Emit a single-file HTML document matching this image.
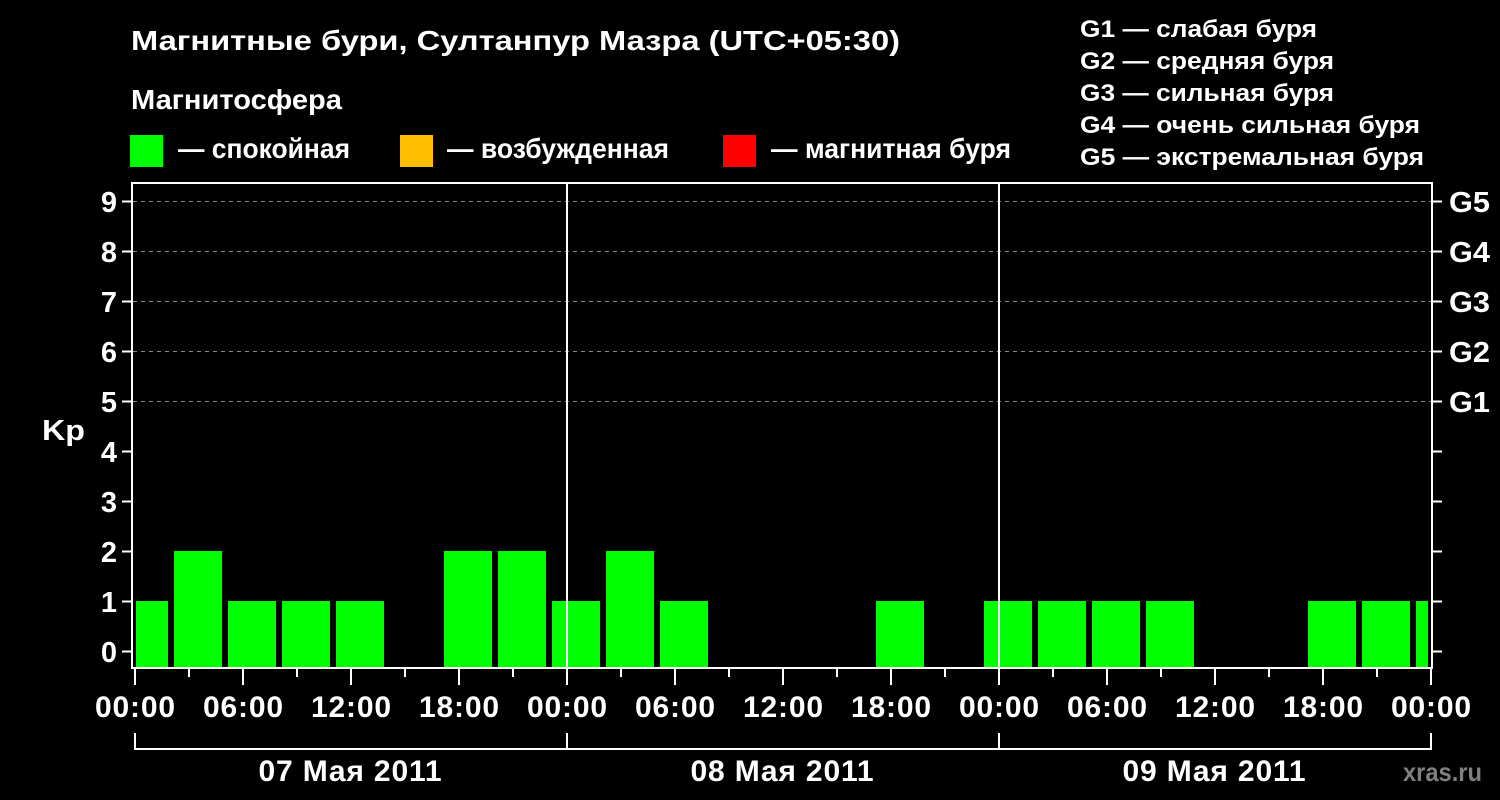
<!DOCTYPE html>
<html><head><meta charset="utf-8"><style>
html,body{margin:0;padding:0;background:#000;width:1500px;height:800px;overflow:hidden}
svg{display:block;font-family:"Liberation Sans",Arial,sans-serif;font-weight:bold}
</style></head><body>
<svg width="1500" height="800" viewBox="0 0 1500 800" xmlns="http://www.w3.org/2000/svg">
<rect width="1500" height="800" fill="#000"/>
<g fill="#fff" font-size="28">
<text x="131" y="50" textLength="769" lengthAdjust="spacingAndGlyphs">Магнитные бури, Султанпур Мазра (UTC+05:30)</text>
<text x="131" y="109" textLength="211" lengthAdjust="spacingAndGlyphs">Магнитосфера</text>
<text x="178" y="158" textLength="172" lengthAdjust="spacingAndGlyphs">— спокойная</text>
<text x="447" y="158" textLength="222" lengthAdjust="spacingAndGlyphs">— возбужденная</text>
<text x="771" y="158" textLength="240" lengthAdjust="spacingAndGlyphs">— магнитная буря</text>
</g>
<rect x="130" y="135" width="33" height="32" fill="#00ff00"/>
<rect x="400" y="135" width="33" height="32" fill="#ffbf00"/>
<rect x="723" y="135" width="33" height="32" fill="#ff0000"/>
<g fill="#fff" font-size="24">
<text x="1080" y="37" textLength="237" lengthAdjust="spacingAndGlyphs">G1 — слабая буря</text>
<text x="1080" y="69" textLength="254" lengthAdjust="spacingAndGlyphs">G2 — средняя буря</text>
<text x="1080" y="101" textLength="254" lengthAdjust="spacingAndGlyphs">G3 — сильная буря</text>
<text x="1080" y="133" textLength="340" lengthAdjust="spacingAndGlyphs">G4 — очень сильная буря</text>
<text x="1080" y="165" textLength="344" lengthAdjust="spacingAndGlyphs">G5 — экстремальная буря</text>
</g>
<g stroke="#888" stroke-dasharray="4,4" stroke-width="1">
<line x1="133" x2="1431" y1="201.5" y2="201.5"/>
<line x1="133" x2="1431" y1="251.5" y2="251.5"/>
<line x1="133" x2="1431" y1="301.5" y2="301.5"/>
<line x1="133" x2="1431" y1="351.5" y2="351.5"/>
<line x1="133" x2="1431" y1="401.5" y2="401.5"/>
</g>
<g fill="#00ff00">
<rect x="136" y="601" width="32" height="67"/>
<rect x="174" y="551" width="48" height="117"/>
<rect x="228" y="601" width="48" height="67"/>
<rect x="282" y="601" width="48" height="67"/>
<rect x="336" y="601" width="48" height="67"/>
<rect x="444" y="551" width="48" height="117"/>
<rect x="498" y="551" width="48" height="117"/>
<rect x="552" y="601" width="48" height="67"/>
<rect x="606" y="551" width="48" height="117"/>
<rect x="660" y="601" width="48" height="67"/>
<rect x="876" y="601" width="48" height="67"/>
<rect x="984" y="601" width="48" height="67"/>
<rect x="1038" y="601" width="48" height="67"/>
<rect x="1092" y="601" width="48" height="67"/>
<rect x="1146" y="601" width="48" height="67"/>
<rect x="1308" y="601" width="48" height="67"/>
<rect x="1362" y="601" width="48" height="67"/>
<rect x="1416" y="601" width="12" height="67"/>
</g>
<g stroke="#fff" stroke-width="2" fill="none">
<rect x="132" y="183" width="1300" height="485"/>
<line x1="567" y1="183" x2="567" y2="668"/>
<line x1="999" y1="183" x2="999" y2="668"/>
<path d="M122 201.5H132M122 251.5H132M122 301.5H132M122 351.5H132M122 401.5H132M122 451.5H132M122 501.5H132M122 551.5H132M122 601.5H132M122 651.5H132"/>
<path d="M1432 201.5H1442M1432 251.5H1442M1432 301.5H1442M1432 351.5H1442M1432 401.5H1442M1432 451.5H1442M1432 501.5H1442M1432 551.5H1442M1432 601.5H1442M1432 651.5H1442"/>
<path d="M135 669V685M243 669V685M351 669V685M459 669V685M567 669V685M675 669V685M783 669V685M891 669V685M999 669V685M1107 669V685M1215 669V685M1323 669V685M1431 669V685"/>
<path d="M189 669V677M297 669V677M405 669V677M513 669V677M621 669V677M729 669V677M837 669V677M945 669V677M1053 669V677M1161 669V677M1269 669V677M1377 669V677"/>
<path d="M135 733V749H1431V733M567 733V749M999 733V749"/>
</g>
<g fill="#fff" font-size="29" text-anchor="end">
<text x="117" y="212">9</text><text x="117" y="262">8</text><text x="117" y="312">7</text>
<text x="117" y="362">6</text><text x="117" y="412">5</text><text x="117" y="462">4</text>
<text x="117" y="512">3</text><text x="117" y="562">2</text><text x="117" y="612">1</text>
<text x="117" y="662">0</text>
</g>
<text x="42" y="440" fill="#fff" font-size="29" textLength="43" lengthAdjust="spacingAndGlyphs">Kp</text>
<g fill="#fff" font-size="29">
<text x="1449" y="212" textLength="41" lengthAdjust="spacingAndGlyphs">G5</text><text x="1449" y="262" textLength="41" lengthAdjust="spacingAndGlyphs">G4</text><text x="1449" y="312" textLength="41" lengthAdjust="spacingAndGlyphs">G3</text>
<text x="1449" y="362" textLength="41" lengthAdjust="spacingAndGlyphs">G2</text><text x="1449" y="412" textLength="41" lengthAdjust="spacingAndGlyphs">G1</text>
</g>
<g fill="#fff" font-size="30" text-anchor="middle" lengthAdjust="spacingAndGlyphs">
<text x="135" y="717" textLength="80">00:00</text><text x="243" y="717" textLength="80">06:00</text><text x="351" y="717" textLength="80">12:00</text>
<text x="459" y="717" textLength="80">18:00</text><text x="567" y="717" textLength="80">00:00</text><text x="675" y="717" textLength="80">06:00</text>
<text x="783" y="717" textLength="80">12:00</text><text x="891" y="717" textLength="80">18:00</text><text x="999" y="717" textLength="80">00:00</text>
<text x="1107" y="717" textLength="80">06:00</text><text x="1215" y="717" textLength="80">12:00</text><text x="1323" y="717" textLength="80">18:00</text>
<text x="1431" y="717" textLength="80">00:00</text>
<text x="350" y="781" textLength="183">07 Мая 2011</text>
<text x="782" y="781" textLength="183">08 Мая 2011</text>
<text x="1214" y="781" textLength="183">09 Мая 2011</text>
</g>
<text x="1482" y="781" fill="#808080" font-size="26" text-anchor="end" textLength="79" lengthAdjust="spacingAndGlyphs">xras.ru</text>
</svg>
</body></html>
